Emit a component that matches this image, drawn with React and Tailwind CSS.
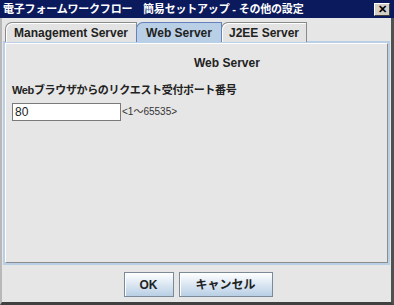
import React from "react";

const font = "font-['Liberation_Sans','Noto_Sans_CJK_JP',sans-serif]";

const Tab = ({ label, selected, className = "" }) => (
  <div
    className={`h-[20px] flex items-center justify-center rounded-tl-[7px] border-t border-l border-r text-[12px] font-bold text-[#222] ${
      selected
        ? "bg-[#b8cfe5] border-[#6382bf] z-10"
        : "bg-[#e3e3e3] border-[#8a8a8a] shadow-[inset_1px_1px_0_#ffffff]"
    } ${className}`}
  >
    {label}
  </div>
);

const Button = ({ children, className = "" }) => (
  <button
    className={`h-[25px] border border-[#7a8a99] bg-gradient-to-b from-[#ffffff] to-[#b8cfe5] text-[12px] font-bold text-[#222] shadow-[inset_1px_1px_0_#ffffff] ${className}`}
  >
    {children}
  </button>
);

export default function App() {
  return (
    <div className={`w-[394px] h-[305px] flex flex-col bg-[#e6e6e6] ${font}`}>
      {/* title bar */}
      <div className="h-[18px] bg-[#0a1a5c] flex items-center pl-[3px] pr-[4px]">
        <span className="text-white text-[11px] font-bold tracking-[-0.2px] whitespace-nowrap">
          電子フォームワークフロー　簡易セットアップ - その他の設定
        </span>
        <div className="ml-auto w-[16px] h-[13px] bg-[#d4d0c8] border border-t-white border-l-white border-r-[#404040] border-b-[#404040] flex items-center justify-center text-[11px] font-bold leading-none text-black">
          ✕
        </div>
      </div>

      <div className="flex-1 flex flex-col border-l-2 border-l-[#b8b8b8] border-r-[3px] border-r-[#505050] border-b-[3px] border-b-[#404040] pl-px pr-0">
        {/* tabs */}
        <div className="flex pt-[4px] pl-[2px] relative">
          <Tab label="Management Server" className="w-[132px]" />
          <Tab label="Web Server" selected className="w-[86px] -ml-px" />
          <Tab label="J2EE Server" className="w-[86px] -ml-px" />
        </div>

        {/* panel */}
        <div className="h-[224px] border-2 border-[#b8cfe5] -mt-px mr-px">
          <div className="h-full border-t border-l border-white border-r border-b border-r-[#8c8c8c] border-b-[#8c8c8c] flex flex-col pl-[6px]">
            <div className="pt-[10px] pl-[182px] text-[12px] font-bold text-[#222]">Web Server</div>
            <div className="mt-[10px] text-[11px] font-bold text-[#222] tracking-[-0.35px]">
              Webブラウザからのリクエスト受付ポート番号
            </div>
            <div className="mt-[4px] flex items-center">
              <div className="w-[109px] h-[18px] bg-white border border-[#7a7a7a] flex items-center pl-[2px] text-[12px] text-[#222]">
                80
              </div>
              <span className="ml-[1px] text-[10px] text-[#333]">&lt;1～65535&gt;</span>
            </div>
          </div>
        </div>

        {/* buttons */}
        <div className="flex justify-center gap-[5px] mt-[7px] pl-[2px]">
          <Button className="w-[50px]">OK</Button>
          <Button className="w-[94px]">キャンセル</Button>
        </div>
      </div>
    </div>
  );
}
